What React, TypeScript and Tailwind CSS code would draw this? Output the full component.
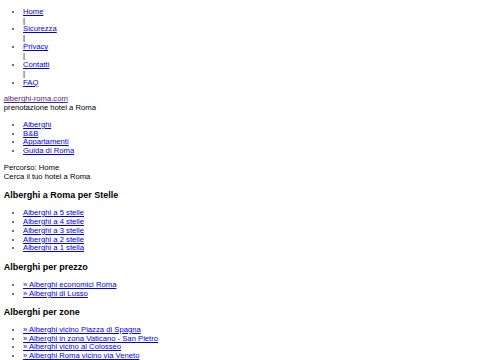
import React from 'react';

const nav = ['Home', 'Sicurezza', 'Privacy', 'Contatti', 'FAQ'];
const sections = ['Alberghi', 'B&B', 'Appartamenti', 'Guida di Roma'];
const stelle = ['Alberghi a 5 stelle', 'Alberghi a 4 stelle', 'Alberghi a 3 stelle', 'Alberghi a 2 stelle', 'Alberghi a 1 stella'];
const prezzo = ['» Alberghi economici Roma', '» Alberghi di Lusso'];
const zone = [
  '» Alberghi vicino Piazza di Spagna',
  '» Alberghi in zona Vaticano - San Pietro',
  '» Alberghi vicino al Colosseo',
  '» Alberghi Roma vicino via Veneto',
];

function LinkList({ items }: { items: string[] }) {
  return (
    <ul className="list-disc pl-[19.2px] my-[7.68px] marker:text-[#444]">
      {items.map((t) => (
        <li key={t}>
          <a href="#" className="text-[#0000ee] underline">{t}</a>
        </li>
      ))}
    </ul>
  );
}

function Heading({ children }: { children: React.ReactNode }) {
  return <h3 className="text-[9px] leading-[10.35px] font-bold my-[8.5px]">{children}</h3>;
}

export default function App() {
  return (
    <div className="w-[480px] h-[360px] overflow-hidden bg-white text-black text-[7.68px] leading-[8.88px] px-[3.84px] pt-[7.68px] font-['Liberation_Sans',Arial,sans-serif]">
      <ul className="list-disc pl-[19.2px] mb-[7.68px] marker:text-[#444]">
        {nav.map((t, i) => (
          <li key={t}>
            <a href="#" className="text-[#0000ee] underline">{t}</a>
            {i < nav.length - 1 && <div>|</div>}
          </li>
        ))}
      </ul>

      <div>
        <a href="#" className="text-[#551a8b] underline">alberghi-roma.com</a>
        <div>prenotazione hotel a Roma</div>
      </div>

      <LinkList items={sections} />

      <div>Percorso: Home</div>
      <div>Cerca il tuo hotel a Roma</div>

      <Heading>Alberghi a Roma per Stelle</Heading>
      <LinkList items={stelle} />

      <Heading>Alberghi per prezzo</Heading>
      <LinkList items={prezzo} />

      <Heading>Alberghi per zone</Heading>
      <LinkList items={zone} />
    </div>
  );
}
